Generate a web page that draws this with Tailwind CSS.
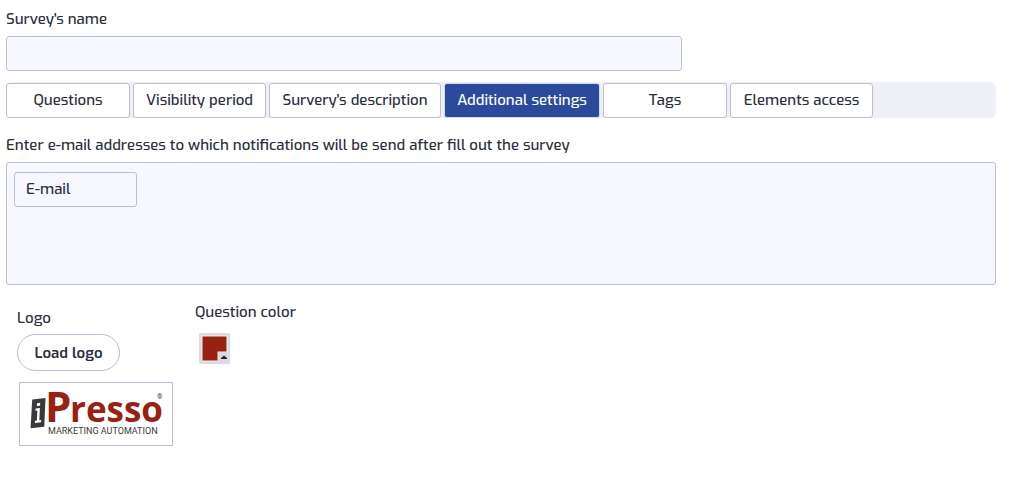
<!doctype html>
<html lang="en">
  <head>
    <meta charset="UTF-8" />
    <meta name="viewport" content="width=device-width, initial-scale=1.0" />
    <title>Survey</title>
    <script src="https://cdn.jsdelivr.net/npm/@tailwindcss/browser@4"></script>
  </head>
  <body class="bg-white font-[Exo,'Exo_2',Roboto,sans-serif] text-[15px] font-medium text-[#2a2d3e]">
    <form class="pt-[7px] pr-[19px] pl-[6px]">
      <label for="name" class="block leading-6">Survey's name</label>
      <input
        id="name"
        type="text"
        class="mt-[5px] block h-[35px] w-[676px] max-w-full rounded-[3px] border border-[#b9bdd6] bg-[#f7f7ff] px-[11px]"
      />

      <nav class="mt-[11px] flex gap-[3px] rounded-md bg-[#efeff8] pt-px">
        <button type="button" class="h-[35px] w-[124px] rounded-[3px] border border-[#b9bdd6] bg-white pb-px whitespace-nowrap">Questions</button>
        <button type="button" class="h-[35px] w-[133px] rounded-[3px] border border-[#b9bdd6] bg-white pb-px whitespace-nowrap">Visibility period</button>
        <button type="button" class="h-[35px] w-[172px] rounded-[3px] border border-[#b9bdd6] bg-white pb-px whitespace-nowrap">Survery's description</button>
        <button type="button" class="h-[35px] w-[156px] rounded-[3px] border border-[#d5d9ec] bg-[#2b4a9b] pb-px whitespace-nowrap text-white">Additional settings</button>
        <button type="button" class="h-[35px] w-[124px] rounded-[3px] border border-[#b9bdd6] bg-white pb-px whitespace-nowrap">Tags</button>
        <button type="button" class="h-[35px] w-[143px] rounded-[3px] border border-[#b9bdd6] bg-white pb-px whitespace-nowrap">Elements access</button>
      </nav>

      <label for="email" class="mt-[15px] block leading-6">
        Enter e-mail addresses to which notifications will be send after fill out the survey
      </label>
      <div class="mt-[5px] min-h-[123px] rounded-[3px] border border-[#b9bdd6] bg-[#f7f7ff] px-[7px] py-[9px]">
        <input
          id="email"
          type="text"
          placeholder="E-mail"
          class="block h-[35px] w-[123px] rounded-[3px] border border-[#b9bdd6] px-[11px] pb-px placeholder:text-[#2a2d3e]"
        />
      </div>

      <div class="flex items-start">
        <div class="mt-[21px] w-[189px] pl-[11px]">
          <label for="load" class="block leading-6">Logo</label>
          <button
            id="load"
            type="button"
            class="mt-[4px] block h-[37px] w-[103px] rounded-full border border-[#b9bdd6] bg-white pt-px font-semibold whitespace-nowrap"
          >
            Load logo
          </button>
          <div class="mt-[11px] ml-[2px] h-[64px] w-[154px] border border-[#b9bdd6]">
            <svg viewBox="0 0 152 62" class="block h-full w-full overflow-visible" role="img" aria-label="iPresso Marketing Automation">
              <path d="M12.200 16.400 25.500 15 24.300 43.800 10.600 45.300Z" fill="#3a3a3a" />
              <path d="M17 20.200 20.200 19.800 20 22.700 16.800 23Z" fill="#fff" />
              <path d="M15.600 25.500 19.900 25.100 19.300 37.300 21.200 37.100 21 39.300 14.900 39.900 15 37.700 16.900 37.500 17.400 27.600 15.500 27.800Z" fill="#fff" />
              <text x="25" y="39" fill="#98220f" font-family="Open Sans" font-size="42" font-weight="700">P<tspan x="50" font-size="35">resso</tspan></text>
              <text x="137" y="16" fill="#3a3a3a" font-family="Roboto" font-size="7" font-weight="400">®</text>
              <text x="28" y="51" fill="#3a3a3a" font-family="Roboto" font-size="9" font-weight="400">MARKETING AUTOMATION</text>
            </svg>
          </div>
        </div>

        <div class="mt-[15px]">
          <label for="color" class="block leading-6">Question color</label>
          <button id="color" type="button" aria-label="Pick a color" class="mt-[9px] ml-[4px] block size-[31px]">
            <svg viewBox="0 0 31 31" class="block h-full w-full">
              <rect width="31" height="31" rx="2" fill="#dadbe2" />
              <path d="M2.500 2.500H28.500V19H19V28.500H2.500Z" fill="#f4eff2" />
              <path d="M3.500 3.500H27.500V18.500H18.500V27.500H3.500Z" fill="#98220f" />
              <path d="M19 19H28V28H19Z" fill="#dadbe2" />
              <path d="M22 26V25L25 22.500 28 25V26Z" fill="#22242e" />
            </svg>
          </button>
        </div>
      </div>
    </form>
  </body>
</html>
